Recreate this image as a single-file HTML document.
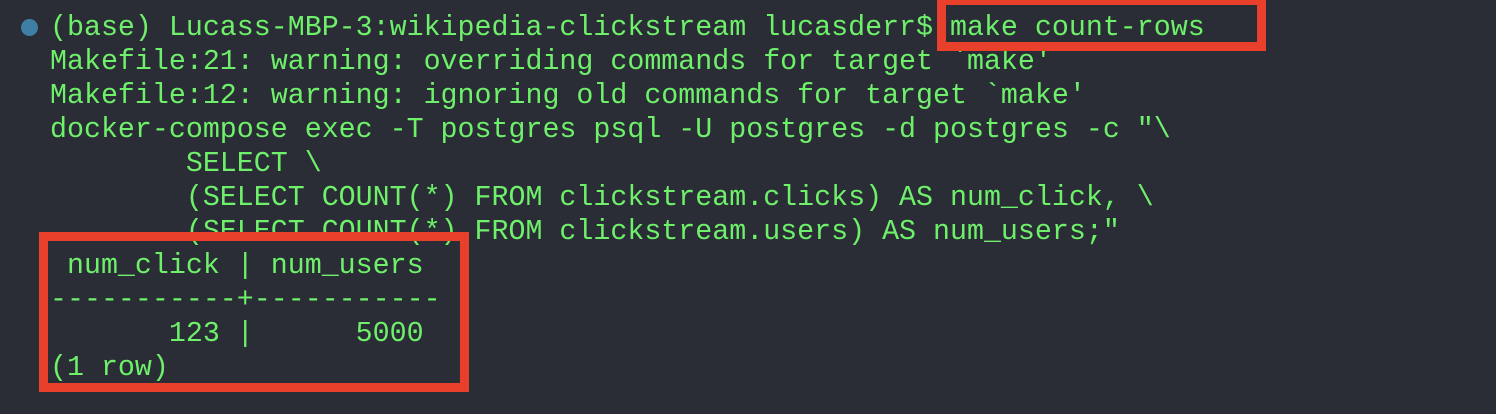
<!DOCTYPE html>
<html><head><style>
html,body{margin:0;padding:0;}
body{width:1496px;height:414px;background:#2a2d35;overflow:hidden;position:relative;}
pre{position:absolute;left:50px;top:11px;margin:0;font-family:"Liberation Mono",monospace;font-size:28.3px;line-height:34px;color:#6ef06a;white-space:pre;}
.dot{position:absolute;left:21px;top:19px;width:17px;height:17px;border-radius:50%;background:#3f7fa6;}
.box{position:absolute;border:9px solid #e8402a;box-sizing:border-box;}
</style></head><body>
<div class="dot"></div>
<pre>(base) Lucass-MBP-3:wikipedia-clickstream lucasderr$ make count-rows
Makefile:21: warning: overriding commands for target `make'
Makefile:12: warning: ignoring old commands for target `make'
docker-compose exec -T postgres psql -U postgres -d postgres -c "\
        SELECT \
        (SELECT COUNT(*) FROM clickstream.clicks) AS num_click, \
        (SELECT COUNT(*) FROM clickstream.users) AS num_users;"
 num_click | num_users
-----------+-----------
       123 |      5000
(1 row)</pre>
<div class="box" style="left:937px;top:-4px;width:329px;height:55px;"></div>
<div class="box" style="left:39px;top:232px;width:430px;height:160px;"></div>
</body></html>
